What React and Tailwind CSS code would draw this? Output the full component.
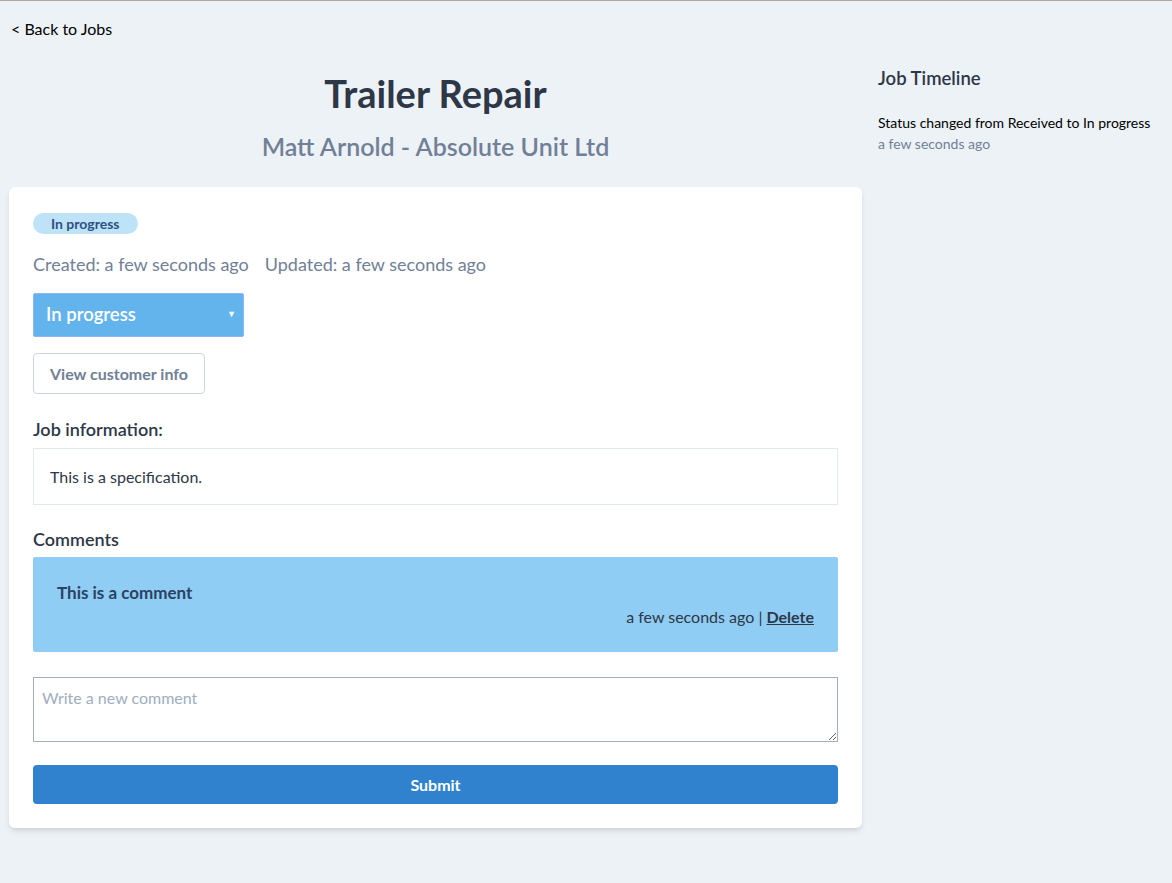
export default function App() {
  return (
    <div className="min-h-[883px] bg-[#edf2f7] border-t border-[#a9a9a9] font-['Lato',sans-serif] text-[#2d3748]">
      <div className="px-[11px] pt-[17px] leading-[22px]">
        <a className="text-[16px] text-black">&lt; Back to Jobs</a>
      </div>
      <div className="flex gap-4 pl-[9px]">
        {/* Main column */}
        <div className="w-[853px] pt-[29px]">
          <h1 className="text-center text-[38px] font-bold leading-[48px] text-[#2d3748]">Trailer Repair</h1>
          <h2 className="text-center text-[25px] font-semibold text-[#718096] mt-[13px] leading-[32px]">Matt Arnold - Absolute Unit Ltd</h2>

          <div className="mt-[25px] bg-white rounded-md shadow-md px-6 pt-[26px] pb-6">
            <div className="w-fit bg-[#bee3f8] text-[#2c5282] text-[14px] font-bold rounded-full px-[18px] leading-[21px]">In progress</div>
            <div className="mt-[18px] text-[18px] text-[#718096] leading-6 flex gap-4">
              <span>Created: a few seconds ago</span>
              <span>Updated: a few seconds ago</span>
            </div>
            <div className="mt-[17px] relative w-[211px] h-[44px] bg-[#63b3ed] border border-[#8fb4f7] rounded-[2px] flex items-center px-3 text-white text-[18.5px] font-semibold">
              In progress
              <span className="absolute right-[7px] top-[13px] text-[9px]">▼</span>
            </div>
            <button className="mt-4 h-[41px] px-4 border border-[#cbd5e0] rounded text-[16px] font-bold text-[#718096] bg-white">View customer info</button>

            <h3 className="mt-[23px] text-[18px] font-semibold text-[#2d3748] leading-6">Job information:</h3>
            <div className="mt-[7px] border border-[#e2e8f0] px-4 h-[57px] flex items-center text-[16px] text-[#2d3748]">
              This is a specification.
            </div>

            <h3 className="mt-[22px] text-[18px] font-semibold text-[#2d3748] leading-6">Comments</h3>
            <div className="mt-[6px] bg-[#90cdf4] rounded-[2px] px-6 pt-[26px] h-[95px]">
              <p className="text-[17px] font-bold text-[#2a4365] leading-5">This is a comment</p>
              <p className="text-right text-[16px] text-[#2d3748] leading-5 mt-[4px]">
                a few seconds ago | <span className="underline font-bold">Delete</span>
              </p>
            </div>

            <textarea
              className="mt-[25px] block w-full h-[65px] border border-[#a0aec0] px-2 py-[10px] text-[16px] placeholder-[#a0aec0] leading-5"
              placeholder="Write a new comment"
            />

            <button className="mt-[23px] w-full h-[39px] bg-[#3182ce] rounded text-white text-[16px] font-bold">Submit</button>
          </div>
        </div>

        {/* Sidebar */}
        <div className="flex-1 pt-[26px]">
          <h3 className="text-[18.5px] font-semibold text-[#2d3748] leading-6">Job Timeline</h3>
          <div className="mt-[22px] text-[14px] leading-[21px]">
            <p className="text-black">Status changed from Received to In progress</p>
            <p className="text-[#718096]">a few seconds ago</p>
          </div>
        </div>
      </div>
    </div>
  )
}
